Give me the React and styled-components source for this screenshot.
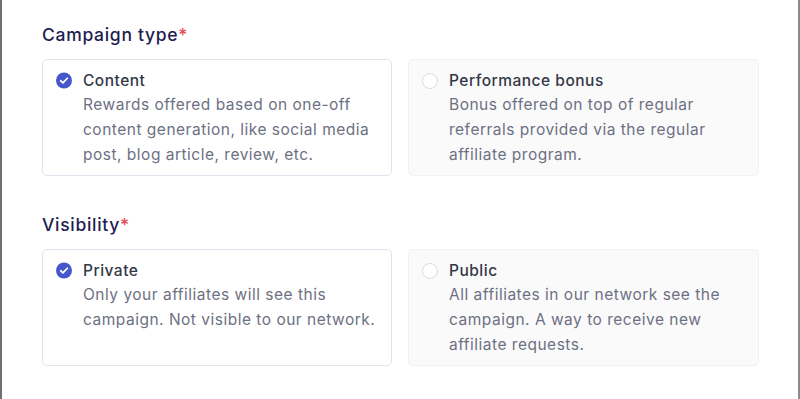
import styled, { createGlobalStyle } from 'styled-components'

const GlobalStyle = createGlobalStyle`
  html, body {
    margin: 0;
    padding: 0;
    background: #ffffff;
  }
  * {
    box-sizing: border-box;
  }
`

const Frame = styled.div`
  width: 800px;
  height: 399px;
  border-left: 2px solid #6f6f74;
  border-right: 2px solid #8c8c90;
  padding: 23px 39px 0 40px;
  font-family: Inter, "Noto Sans", sans-serif;
  overflow: hidden;
`

const Section = styled.section`
  margin-bottom: 37px;
`

const Heading = styled.h3`
  margin: 0 0 12px;
  font-size: 17.5px;
  line-height: 24px;
  font-weight: 500;
  color: #1d2150;
  letter-spacing: 0.7px;
`

const Required = styled.span`
  color: #e5484d;
`

const Options = styled.div`
  display: grid;
  grid-template-columns: 350px 351px;
  gap: 16px;
`

const Card = styled.label`
  display: flex;
  gap: 11px;
  padding: 9px 12px 8px 13px;
  border-radius: 5px;
  border: 1px solid ${p => (p.$selected ? '#e1e3ee' : '#f0f0f5')};
  background: ${p => (p.$selected ? '#ffffff' : '#fafafb')};
  cursor: pointer;
`

const Mark = styled.span`
  flex: none;
  width: 16px;
  height: 23px;
  display: flex;
  align-items: center;
  justify-content: center;
`

const Radio = styled.span`
  width: 16px;
  height: 16px;
  border-radius: 50%;
  border: 1.5px solid #d9dbea;
  background: #ffffff;
`

const Body = styled.div`
  display: flex;
  flex-direction: column;
  letter-spacing: 0.5px;
`

const Title = styled.div`
  font-size: 15.5px;
  line-height: 23px;
  font-weight: 500;
  color: #343846;
`

const Desc = styled.div`
  font-size: 15.5px;
  line-height: 25px;
  color: #6d7082;
`

function Checked() {
  return (
    <svg width="17" height="17" viewBox="0 0 20 20">
      <circle cx="10" cy="10" r="10" fill="#4657cc" />
      <path d="M5.8 10.3l2.8 2.7 5.6-5.8" fill="none" stroke="#fff" strokeWidth="2.2" strokeLinecap="round" strokeLinejoin="round" />
    </svg>
  )
}

function Option({ selected, title, children }) {
  return (
    <Card $selected={selected}>
      <Mark>{selected ? <Checked /> : <Radio />}</Mark>
      <Body>
        <Title>{title}</Title>
        <Desc>{children}</Desc>
      </Body>
    </Card>
  )
}

export default function App() {
  return (
    <>
      <GlobalStyle />
      <Frame>
        <Section>
          <Heading>Campaign type<Required>*</Required></Heading>
          <Options>
            <Option selected title="Content">
              Rewards offered based on one-off content generation, like social media post, blog article, review, etc.
            </Option>
            <Option title="Performance bonus">
              Bonus offered on top of regular referrals provided via the regular affiliate program.
            </Option>
          </Options>
        </Section>
        <Section>
          <Heading>Visibility<Required>*</Required></Heading>
          <Options>
            <Option selected title="Private">
              Only your affiliates will see this campaign. Not visible to our network.
            </Option>
            <Option title="Public">
              All affiliates in our network see the campaign. A way to receive new affiliate requests.
            </Option>
          </Options>
        </Section>
      </Frame>
    </>
  )
}
